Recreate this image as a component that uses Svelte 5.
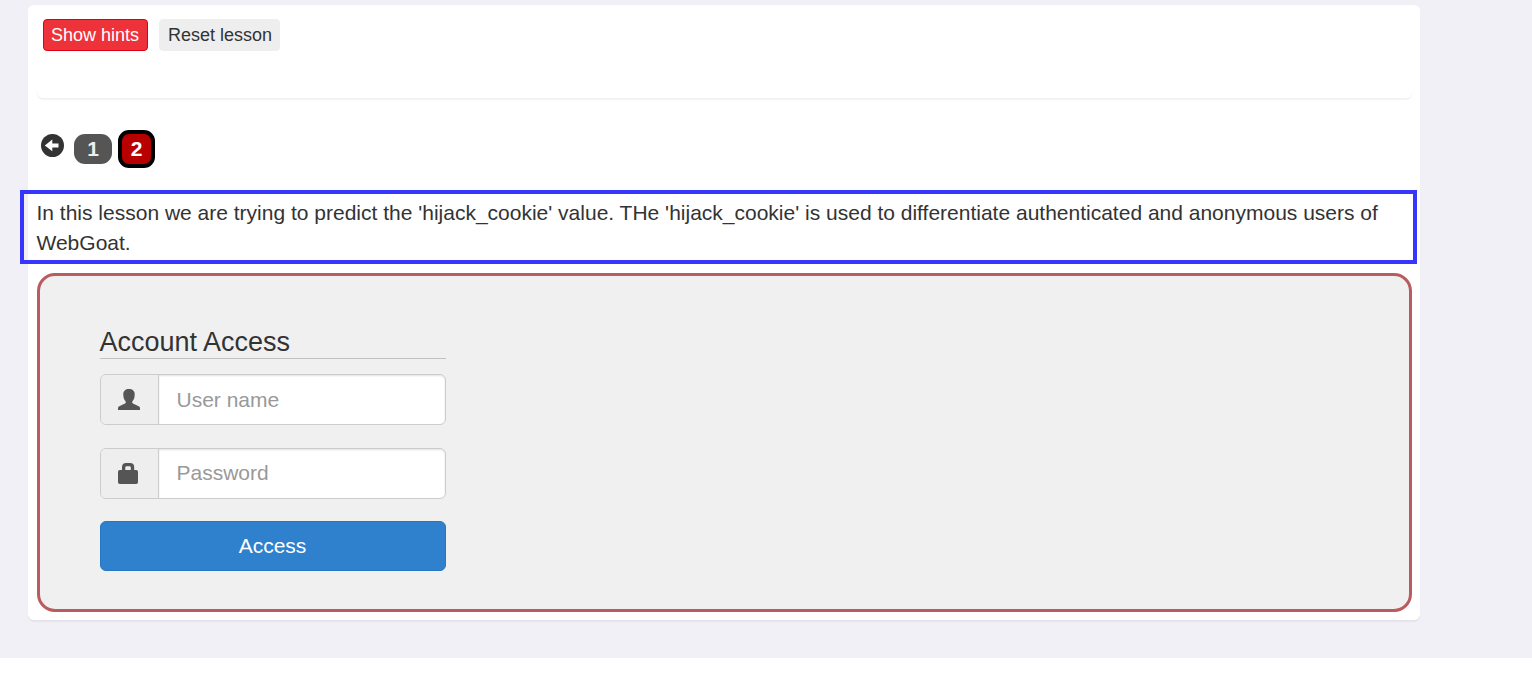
<script>
  let username = $state('');
  let password = $state('');
</script>

<div class="page">
  <main class="card">
    <header class="panel">
      <button class="hints">Show hints</button>
      <button class="reset">Reset lesson</button>
    </header>

    <nav class="pager">
      <svg class="back" viewBox="0 0 23 23" aria-hidden="true">
        <circle cx="11.5" cy="11.5" r="11.5" fill="#333" />
        <path d="M3.8 11.4L11.3 5.4V9.4H17.5V13.4H11.3V17.2Z" fill="#fff" />
      </svg>
      <span class="step">1</span>
      <span class="step current">2</span>
    </nav>

    <p class="intro">
      In this lesson we are trying to predict the 'hijack_cookie' value. THe 'hijack_cookie' is used to differentiate authenticated and anonymous users of WebGoat.
    </p>

    <section class="attack">
      <form>
        <h4>Account Access</h4>
        <div class="group">
          <span class="addon">
            <svg width="22" height="21" viewBox="0 0 22 21" fill="#555">
              <path d="M11 0C7.4 0 5.3 2 5.3 5.2C5.3 8.4 6 10.8 7.7 12.4V14C6 15.3 2.6 16.3.8 17.5C.1 18 0 18.8 0 20V21H22V20C22 18.8 21.9 18 21.2 17.5C19.4 16.3 16 15.3 14.3 14V12.4C16 10.8 16.7 8.4 16.7 5.2C16.7 2 14.6 0 11 0Z" />
            </svg>
          </span>
          <input type="text" placeholder="User name" bind:value={username} />
        </div>
        <div class="group">
          <span class="addon">
            <svg width="22" height="21" viewBox="0 0 22 21" fill="#555">
              <path fill-rule="evenodd" d="M4 7V4.2Q4 0 8.2 0H12Q16.2 0 16.2 4.2V7H18.2Q20 7 20 8.8V19.2Q20 21 18.2 21H1.8Q0 21 0 19.2V8.8Q0 7 1.8 7ZM7.3 7H12.8V4.4Q12.8 3.3 11.7 3.3H8.4Q7.3 3.3 7.3 4.4Z" />
            </svg>
          </span>
          <input class="raised" type="password" placeholder="Password" bind:value={password} />
        </div>
        <button class="access" type="button">Access</button>
      </form>
    </section>
  </main>
</div>

<style>
  :global(body) {
    background: #fff;
  }

  .page,
  .page * {
    box-sizing: border-box;
  }

  .page {
    height: 658px;
    padding: 5px 112px 0 28px;
    background: #f1f0f7;
    color: #333;
    font-family: 'Liberation Sans', Arial, sans-serif;
    font-size: 21px;
    line-height: 30px;
  }

  .card {
    height: 615px;
    padding: 0 8px 0 9px;
    background: #fff;
    border-radius: 6px;
    box-shadow: 0 2px 1px rgba(0, 0, 0, 0.05);
  }

  .panel {
    display: flex;
    align-items: flex-start;
    gap: 11px;
    height: 93px;
    padding: 14px 6px 0;
    border-radius: 6px;
    box-shadow: 0 2px 1px rgba(0, 0, 0, 0.05);
  }

  button {
    padding: 0;
    font-family: inherit;
  }

  .hints,
  .reset {
    height: 32px;
    border-radius: 4px;
    font-size: 18px;
    line-height: 28px;
  }

  .hints {
    width: 105px;
    padding-right: 1px;
    border: 1px solid #e00013;
    background: #ee3239;
    color: #fff;
  }

  .reset {
    width: 121px;
    padding-left: 1px;
    border: 1px solid #eee;
    background: #eee;
    color: #333;
  }

  .pager {
    display: flex;
    align-items: center;
    height: 38px;
    margin-top: 32px;
    padding-left: 4px;
  }

  .back {
    width: 23px;
    height: 23px;
    margin: 0 10px 7px 0;
  }

  .step {
    width: 38px;
    height: 30px;
    border-radius: 11px;
    background: #555;
    color: #eee;
    font-weight: bold;
    line-height: 30px;
    text-align: center;
  }

  .current {
    width: 37px;
    height: 38px;
    margin-left: 6px;
    border: 4px solid #000;
    background: #b90000;
    color: #fff;
  }

  .intro {
    height: 74px;
    margin: 22px -5px 0 -17px;
    padding: 4px 12.5px;
    border: 4px solid #3636ff;
  }

  .attack {
    height: 339px;
    margin-top: 9px;
    padding: 46px 60px;
    border: 3px solid #b85c60;
    border-radius: 18px;
    background: #f0f0f0;
  }

  form {
    width: 346px;
  }

  h4 {
    height: 37px;
    margin: 0 0 15px;
    padding-top: 5px;
    border-bottom: 1px solid #c2c2c2;
    font-size: 27px;
    font-weight: normal;
    line-height: 30px;
    text-indent: -0.5px;
  }

  .group {
    display: flex;
    height: 51px;
    margin-bottom: 23px;
    border: 1px solid #ccc;
    border-radius: 6px;
    overflow: hidden;
  }

  .addon {
    display: flex;
    align-items: center;
    width: 58px;
    padding-left: 17px;
    background: #eee;
    border-right: 1px solid #ccc;
  }

  input {
    flex: 1;
    min-width: 0;
    padding: 0 17.5px;
    border: 0;
    outline: 0;
    border-radius: 0 5px 5px 0;
    background: #fff;
    box-shadow: inset 0 1px 2px rgba(0, 0, 0, 0.12);
    color: #555;
    font: 21px 'Liberation Sans', Arial, sans-serif;
  }

  .raised {
    padding-bottom: 2px;
  }

  input::placeholder {
    color: #999;
  }

  .access {
    display: block;
    width: 100%;
    height: 50px;
    margin-top: -1px;
    padding-right: 1px;
    border: 1px solid #2776c0;
    border-radius: 6px;
    background: #2f80cd;
    color: #fff;
    font-size: 21px;
  }
</style>
